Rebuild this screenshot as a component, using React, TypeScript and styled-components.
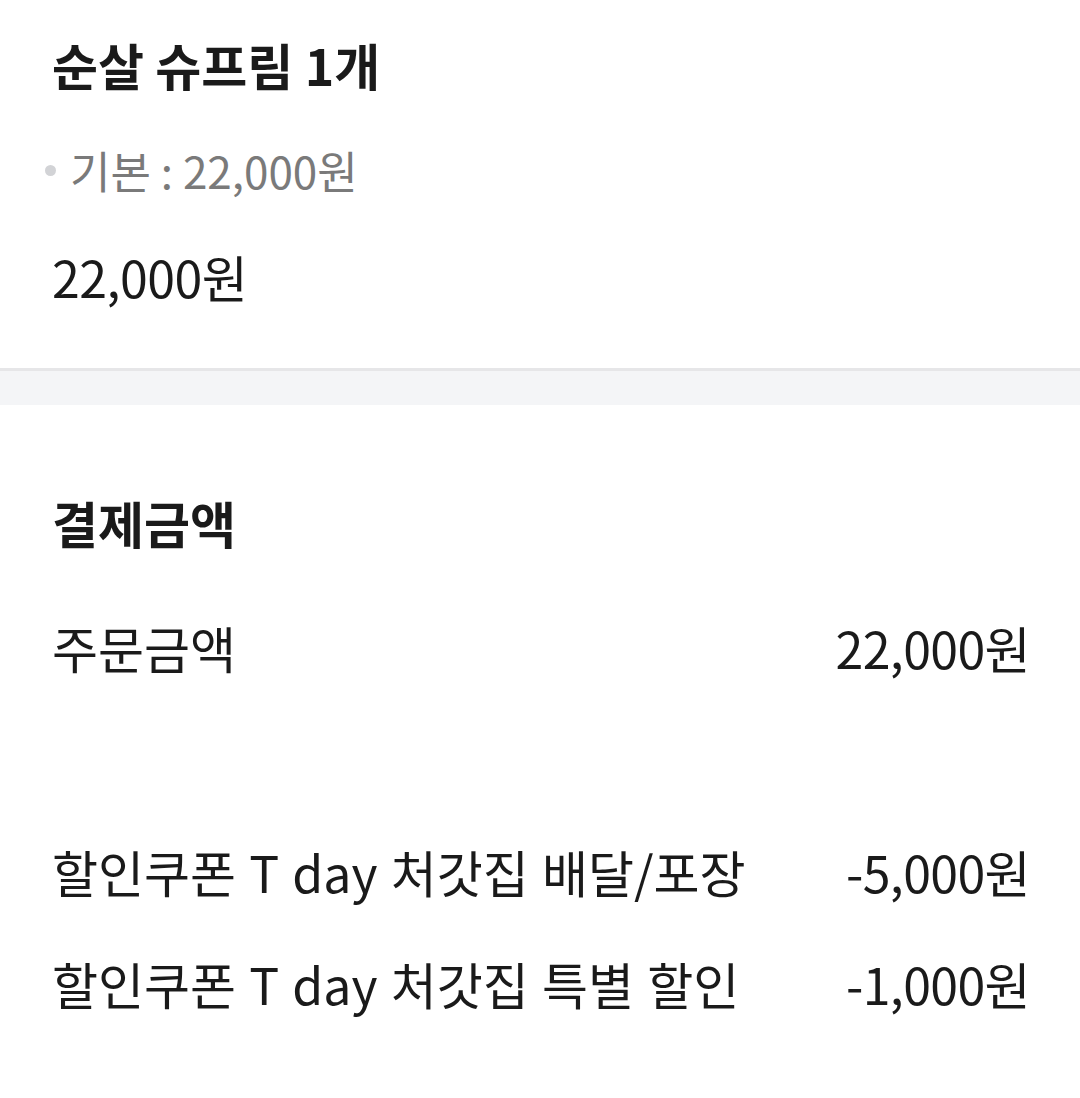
import React from 'react'
import styled, { createGlobalStyle } from 'styled-components'

const GlobalStyle = createGlobalStyle`
  body {
    margin: 0;
    background: #ffffff;
    font-family: 'Noto Sans CJK KR', 'Noto Sans', sans-serif;
    color: #1a1a1a;
  }
`

const Page = styled.div`
  width: 1080px;
  min-height: 1098px;
  background: #ffffff;
`

const MenuSection = styled.section`
  padding: 28px 52px 60px;
  border-bottom: 3px solid #e6e6e8;
`

const MenuTitle = styled.div`
  font-size: 50px;
  font-weight: 700;
  line-height: 72px;
`

const OptionLine = styled.div`
  display: flex;
  align-items: center;
  margin-top: 40px;
  margin-left: -7px;
  font-size: 44px;
  line-height: 60px;
  color: #7a7a7a;
`

const Bullet = styled.span`
  width: 11px;
  height: 11px;
  border-radius: 50%;
  background: #d2d3d6;
  margin-right: 14px;
`

const MenuPrice = styled.div`
  margin-top: 44px;
  font-size: 50px;
  line-height: 64px;
  letter-spacing: -0.5px;
`

const Band = styled.div`
  height: 34px;
  background: #f4f5f7;
`

const PaySection = styled.section`
  padding: 85px 50px 40px 52px;
`

const SectionTitle = styled.div`
  font-size: 50px;
  font-weight: 700;
  line-height: 64px;
  margin-bottom: 37px;
`

const Row = styled.div`
  display: flex;
  justify-content: space-between;
  align-items: center;
  height: 112px;
  font-size: 50px;
`

const Label = styled.span`
  word-spacing: 2px;
`

const Amount = styled.span`
  letter-spacing: -0.6px;
`

const rows = [
  { label: '주문금액', value: '22,000원' },
  { label: '', value: '' },
  { label: '할인쿠폰 T day 처갓집 배달/포장', value: '-5,000원' },
  { label: '할인쿠폰 T day 처갓집 특별 할인', value: '-1,000원' },
]

export default function App() {
  return (
    <Page>
      <GlobalStyle />
      <MenuSection>
        <MenuTitle>순살 슈프림 1개</MenuTitle>
        <OptionLine>
          <Bullet />
          기본 : 22,000원
        </OptionLine>
        <MenuPrice>22,000원</MenuPrice>
      </MenuSection>
      <Band />
      <PaySection>
        <SectionTitle>결제금액</SectionTitle>
        {rows.map((row, index) => (
          <Row key={index}>
            <Label>{row.label}</Label>
            <Amount>{row.value}</Amount>
          </Row>
        ))}
      </PaySection>
    </Page>
  )
}
